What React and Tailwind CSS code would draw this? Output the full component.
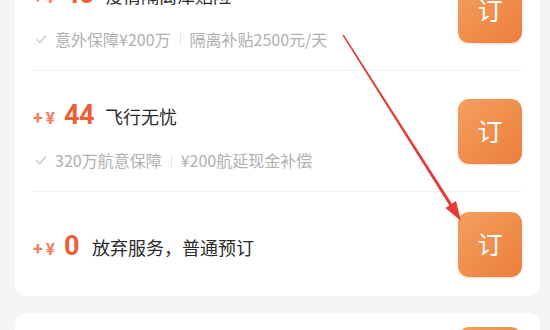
import React from "react";

const rows = [
  {
    price: "40",
    title: "疫情隔离津贴险",
    features: ["意外保障¥200万", "隔离补贴2500元/天"],
  },
  {
    price: "44",
    title: "飞行无忧",
    features: ["320万航意保障", "¥200航延现金补偿"],
  },
];

function Check() {
  return (
    <svg width="12" height="12" viewBox="0 0 12 12" className="shrink-0">
      <polyline
        points="1.5,6.5 4.8,9.5 10.5,3"
        fill="none"
        stroke="#c9c9c9"
        strokeWidth="1.3"
        strokeLinecap="round"
        strokeLinejoin="round"
      />
    </svg>
  );
}

function Price({ value }) {
  return (
    <div className="flex items-baseline font-['Roboto',sans-serif]">
      <span className="text-[18px] font-bold text-[#f2825f]">+</span>
      <span className="ml-[3px] text-[17px] font-bold text-[#f2825f]">¥</span>
      <span className="ml-[9px] text-[27px] font-bold text-[#ec5f37] leading-[30px] tracking-[-0.5px]">
        {value}
      </span>
    </div>
  );
}

function BookButton() {
  return (
    <button className="self-center ml-auto w-[64px] h-[65px] shrink-0 rounded-[11px] bg-gradient-to-br from-[#f4a05e] to-[#ec7d3c] text-white text-[25px] flex items-center justify-center shadow-[0_1px_2px_rgba(236,125,60,0.25)]">
      订
    </button>
  );
}

function Row({ price, title, features }) {
  return (
    <div className="flex h-[121px] border-b border-[#f0f0f0]">
      <div className="pt-[29px]">
        <div className="flex items-baseline h-[30px]">
          <Price value={price} />
          <span className="ml-[11px] text-[18px] text-[#2b2b2b]">{title}</span>
        </div>
        <div className="mt-[20px] h-[20px] flex items-center text-[16px] text-[#b0b0b0] pl-[2px]">
          <Check />
          <span className="ml-[8px]">{features[0]}</span>
          <span className="mx-[9px] w-px h-[13px] bg-[#e6e6e6]" />
          <span>{features[1]}</span>
        </div>
      </div>
      <BookButton />
    </div>
  );
}

export default function App() {
  return (
    <div className="relative w-[550px] h-[330px] overflow-hidden bg-[#f4f5f7] font-['Noto_Sans_CJK_SC',sans-serif]">
      <div className="ml-[15px] w-[525px] -mt-[50px] bg-white rounded-[12px] px-[18px]">
        {rows.map((r) => (
          <Row key={r.price} {...r} />
        ))}
        <div className="flex h-[104px] items-center">
          <div className="flex items-baseline mt-[6px]">
            <Price value="0" />
            <span className="ml-[13px] text-[18px] text-[#2b2b2b]">放弃服务，普通预订</span>
          </div>
          <BookButton />
        </div>
      </div>

      <div className="ml-[15px] w-[525px] mt-[17px] bg-white rounded-[12px] px-[18px] pt-[14px] h-[80px]">
        <div className="flex items-start">
          <div className="pt-[2px]">
            <Price value="58" />
          </div>
          <div className="ml-auto w-[64px] h-[65px] rounded-[11px] bg-gradient-to-br from-[#f4a05e] to-[#ec7d3c]" />
        </div>
      </div>

      <svg className="absolute inset-0 pointer-events-none" width="550" height="330">
        <polygon points="342.5,35.5 343.8,34.7 452.3,204.3 449.7,205.9" fill="#e53a35" />
        <polygon points="461,221 445.5,208 456,201" fill="#e53a35" />
      </svg>
    </div>
  );
}
